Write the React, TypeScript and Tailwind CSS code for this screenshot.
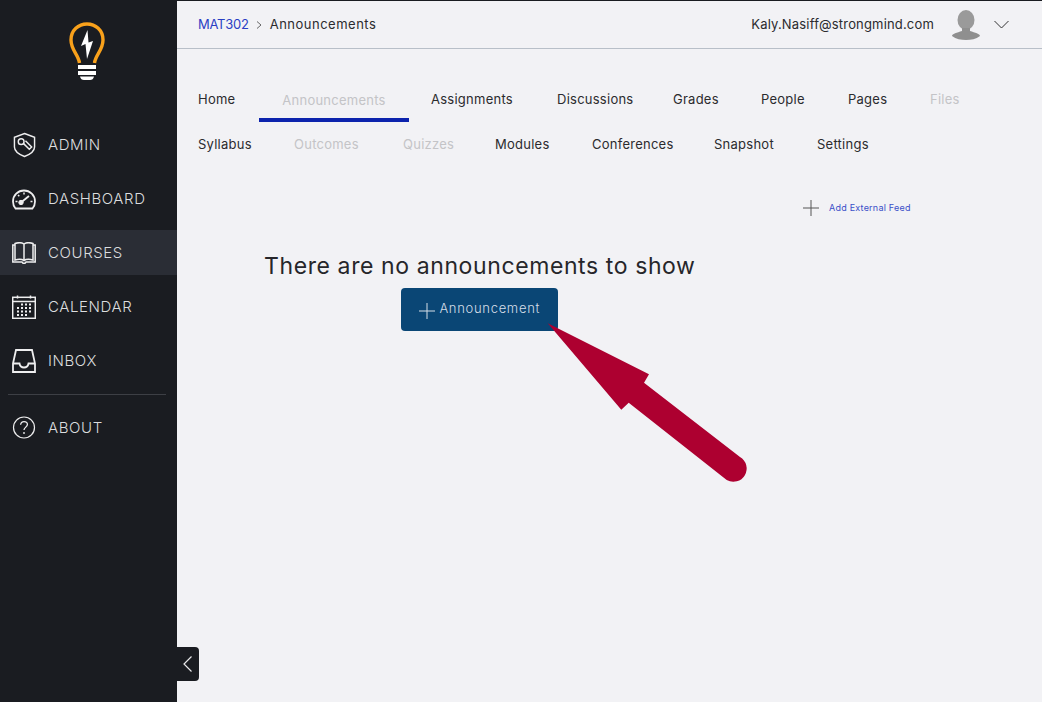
import type React from "react";

const font = { fontFamily: "Inter, 'Liberation Sans', sans-serif" };

type Tab = { label: string; width: string; disabled?: boolean; active?: boolean };

const rowOne: Tab[] = [
	{ label: "Home", width: "w-[61px]" },
	{ label: "Announcements", width: "w-[150px]", disabled: true, active: true },
	{ label: "Assignments", width: "ml-[22px] w-[126px]" },
	{ label: "Discussions", width: "w-[116px]" },
	{ label: "Grades", width: "w-[88px]" },
	{ label: "People", width: "w-[87px]" },
	{ label: "Pages", width: "w-[82px]" },
	{ label: "Files", width: "w-[60px]", disabled: true },
];

const rowTwo: Tab[] = [
	{ label: "Syllabus", width: "w-[96px]" },
	{ label: "Outcomes", width: "w-[109px]", disabled: true },
	{ label: "Quizzes", width: "w-[92px]", disabled: true },
	{ label: "Modules", width: "w-[97px]" },
	{ label: "Conferences", width: "w-[122px]" },
	{ label: "Snapshot", width: "w-[103px]" },
	{ label: "Settings", width: "w-[60px]" },
];

const ShieldIcon = () => (
	<svg className="h-[26px] w-[23px]" fill="none" stroke="currentColor" viewBox="0 0 24 26">
		<path d="M12 1 L22.5 5 V15 C22.5 20 17 23 12 25 C7 23 1.5 20 1.5 15 V5 Z" strokeWidth="1.5" />
		<circle cx="8.5" cy="9.5" r="3" strokeWidth="1.5" />
		<path d="M10.8 11.3 L17 17.5 L19.5 15 L13 8.5" strokeWidth="1.5" />
	</svg>
);

const GaugeIcon = () => (
	<svg className="h-[22px] w-[24px]" fill="none" stroke="currentColor" viewBox="0 0 24 22">
		<path d="M3.5 20.5 C1.8 18.5 1 16 1 13.5 A11 11 0 0 1 23 13.5 C23 16 22.2 18.5 20.5 20.5 Z" strokeWidth="1.8" />
		<path d="M9 14.5 L17 8" strokeWidth="1.8" />
		<circle cx="9" cy="14.5" r="2.2" fill="currentColor" />
		<path d="M12 4.5 V6.5 M6 7 L7.3 8.3 M3.5 13.5 H5.5 M18.5 13.5 H20.5" strokeWidth="1.5" />
	</svg>
);

const BookIcon = () => (
	<svg className="h-[22px] w-[24px]" fill="none" stroke="currentColor" viewBox="0 0 24 22">
		<path d="M3 1.5 C6 0.5 10 0.5 12 2 C14 0.5 18 0.5 21 1.5 V18 C18 17.2 14 17.2 12 18.5 C10 17.2 6 17.2 3 18 Z M12 2 V18.5" strokeWidth="1.5" />
		<path d="M3 3 H0.8 V20 H10 L11 21.2 H13 L14 20 H23.2 V3 H21" strokeWidth="1.5" />
	</svg>
);

const CalendarIcon = () => (
	<svg className="h-[24px] w-[24px]" fill="none" stroke="currentColor" viewBox="0 0 24 24">
		<rect height="21" strokeWidth="1.5" width="22.6" x="0.7" y="2.3" />
		<path d="M1 6.5 H23 M5.5 0.5 V3.5 M18.5 0.5 V3.5" strokeWidth="1.5" />
		<path
			d="M9 9.5 H11 M13 9.5 H15 M17 9.5 H19 M5 13 H7 M9 13 H11 M13 13 H15 M17 13 H19 M5 16.5 H7 M9 16.5 H11 M13 16.5 H15 M17 16.5 H19 M5 20 H7 M9 20 H11 M13 20 H15"
			strokeWidth="1.8"
		/>
	</svg>
);

const InboxIcon = () => (
	<svg className="h-[24px] w-[24px]" fill="none" stroke="currentColor" viewBox="0 0 24 24">
		<path d="M1 14.5 L4 1 H20 L23 14.5 V23 H1 Z" strokeWidth="1.8" />
		<path d="M1 14.5 H7.5 C8 17.5 9.5 18.5 12 18.5 C14.5 18.5 16 17.5 16.5 14.5 H23" strokeWidth="1.8" />
	</svg>
);

const HelpIcon = () => (
	<svg className="h-[24px] w-[24px]" fill="none" stroke="currentColor" viewBox="0 0 24 24">
		<circle cx="12" cy="11.5" r="10.5" strokeWidth="1.2" />
		<path d="M8.6 8.8 C8.8 6.6 10.2 5.6 12 5.6 C14 5.6 15.4 6.9 15.4 8.6 C15.4 11 12 11.3 12 14" strokeWidth="1.3" />
		<circle cx="12" cy="17" fill="currentColor" r="0.9" stroke="none" />
	</svg>
);

const navItems: { label: string; icon: React.ReactNode; active?: boolean }[] = [
	{ label: "ADMIN", icon: <ShieldIcon /> },
	{ label: "DASHBOARD", icon: <GaugeIcon /> },
	{ label: "COURSES", icon: <BookIcon />, active: true },
	{ label: "CALENDAR", icon: <CalendarIcon /> },
	{ label: "INBOX", icon: <InboxIcon /> },
];

const NavRow = ({ label, icon, active }: { label: string; icon: React.ReactNode; active?: boolean }) => (
	<div className={`flex h-[45px] items-center ${active ? "bg-[#2a2d35]" : ""}`}>
		<div className="flex w-[48px] justify-center text-[#eeeeef]">{icon}</div>
		<span className="pt-[2px] text-[15px] font-light tracking-[0.6px] text-[#dcdddf]">{label}</span>
	</div>
);

const TabRow = ({ tabs }: { tabs: Tab[] }) => (
	<div className="flex h-[45px]">
		{tabs.map((tab) => (
			<div
				className={`flex h-[45px] shrink-0 items-center ${tab.width} ${tab.active ? "justify-center border-b-4 border-[#0c23ad] pt-[6px]" : ""} ${tab.disabled ? "text-[#c4c4c7]" : "text-[#2b2b2e]"}`}
				key={tab.label}
			>
				<span className="text-[13px] tracking-[0.25px]">{tab.label}</span>
			</div>
		))}
	</div>
);

export default function App() {
	return (
		<div className="flex h-[702px] w-[1042px] overflow-hidden bg-[#f2f2f5]" style={font}>
			<aside className="flex w-[177px] shrink-0 flex-col bg-[#1a1c21]">
				<div className="flex h-[122px] justify-center pt-[22px] pr-[3px]">
					<svg className="h-[60px] w-[36px]" viewBox="0 0 36 60">
						<path
							d="M10.5 41 C9.5 33 2 28 2 18 C2 8 9.5 2 18 2 C26.5 2 34 8 34 18 C34 28 26.5 33 25.5 41"
							fill="none"
							stroke="#f9a11b"
							strokeWidth="3.4"
						/>
						<path d="M18.5 8 L12 24 L16.5 22 L18 37 L24 19 L19.5 20.5 Z" fill="#ffffff" />
						<path d="M9 43 H27 V47 H9 Z M9 49 H27 V53 H9 Z M11 54.5 H25 C24.5 57 23 58 21 58 H15 C13 58 11.5 57 11 54.5 Z" fill="#ffffff" />
					</svg>
				</div>
				<div className="flex flex-col gap-[9px]">
					{navItems.map((item) => (
						<NavRow active={item.active} icon={item.icon} key={item.label} label={item.label} />
					))}
				</div>
				<div className="mx-[8px] mt-[11px] mb-[10px] h-px w-[158px] bg-[#3d3f45]" />
				<NavRow icon={<HelpIcon />} label="ABOUT" />
			</aside>

			<div className="relative flex min-w-0 flex-1 flex-col">
				<header className="flex h-[49px] shrink-0 items-center border-b border-[#b8bfc8] border-t border-t-[#1a1c21] pl-[21px]">
					<span className="text-[13px] tracking-[-0.25px] text-[#2a3fc4]">MAT302</span>
					<svg className="ml-[7px] h-[8px] w-[6px] text-[#666]" fill="none" stroke="currentColor" viewBox="0 0 6 8">
						<path d="M1 0.5 L5 4 L1 7.5" strokeWidth="1" />
					</svg>
					<span className="ml-[8px] text-[13px] tracking-[0.5px] text-[#2b2b2e]">Announcements</span>
					<span className="ml-auto text-[13px] tracking-[0.17px] text-[#2b2b2e]">Kaly.Nasiff@strongmind.com</span>
					<svg className="ml-[18px] h-[30px] w-[28px]" viewBox="0 0 28 30">
						<ellipse cx="14" cy="10" fill="#9a9a9a" rx="8.5" ry="10" />
						<path d="M10 18 H18 V21 C23 22.5 28 24 28 26 C24 29 19 30 14 30 C9 30 4 29 0 26 C0 24 5 22.5 10 21 Z" fill="#8f8f8f" />
					</svg>
					<svg className="mr-[33px] ml-[14px] h-[9px] w-[15px] text-[#333]" fill="none" stroke="currentColor" viewBox="0 0 15 9">
						<path d="M0.5 1 L7.5 8 L14.5 1" strokeWidth="1" />
					</svg>
				</header>

				<nav className="mt-[28px] pl-[21px]">
					<TabRow tabs={rowOne} />
					<TabRow tabs={rowTwo} />
				</nav>

				<div className="mt-[33px] flex items-center pl-[626px]">
					<svg className="h-[16px] w-[16px] text-[#555]" fill="none" stroke="currentColor" viewBox="0 0 16 16">
						<path d="M8 0 V16 M0 8 H16" strokeWidth="1" />
					</svg>
					<span className="ml-[10px] text-[9px] tracking-[0.22px] text-[#3a4fc8]">Add External Feed</span>
				</div>

				<div className="mt-[37px] ml-[87px] flex w-fit flex-col items-center">
					<h1 className="text-[23px] leading-[26px] font-normal tracking-[0.6px] text-[#26262a]">
						There are no announcements to show
					</h1>
					<button className="mt-[9px] flex h-[43px] w-[157px] items-center justify-center rounded-[4px] bg-[#0a4675] text-[#d5dee8]" type="button">
						<svg className="mt-[3px] h-[16px] w-[16px]" fill="none" stroke="currentColor" viewBox="0 0 16 16">
							<path d="M8 0 V16 M0 8 H16" strokeWidth="1" />
						</svg>
						<span className="mb-[2px] ml-[4px] text-[13px] font-light tracking-[0.7px]">Announcement</span>
					</button>
				</div>

				{/* pointer arrow drawn over the page, in screenshot coordinates */}
				<svg className="pointer-events-none absolute top-0 left-0 h-[702px] w-[865px]" viewBox="177 0 865 702">
					<path
						d="M547.7 323.3 L649 374.3 L644 382.7 L740 457 A12.7 12.7 0 0 1 726.7 480 L628.7 402.7 L621.3 409.7 Z"
						fill="#ad0030"
					/>
				</svg>

				<div className="absolute top-[647px] left-0 flex h-[34px] w-[22px] items-center justify-center rounded-r-[4px] bg-[#1a1c21]">
					<svg className="h-[16px] w-[10px] text-[#e8e8ea]" fill="none" stroke="currentColor" viewBox="0 0 10 16">
						<path d="M8.5 0.5 L1 8 L8.5 15.5" strokeWidth="1.2" />
					</svg>
				</div>
			</div>
		</div>
	);
}
